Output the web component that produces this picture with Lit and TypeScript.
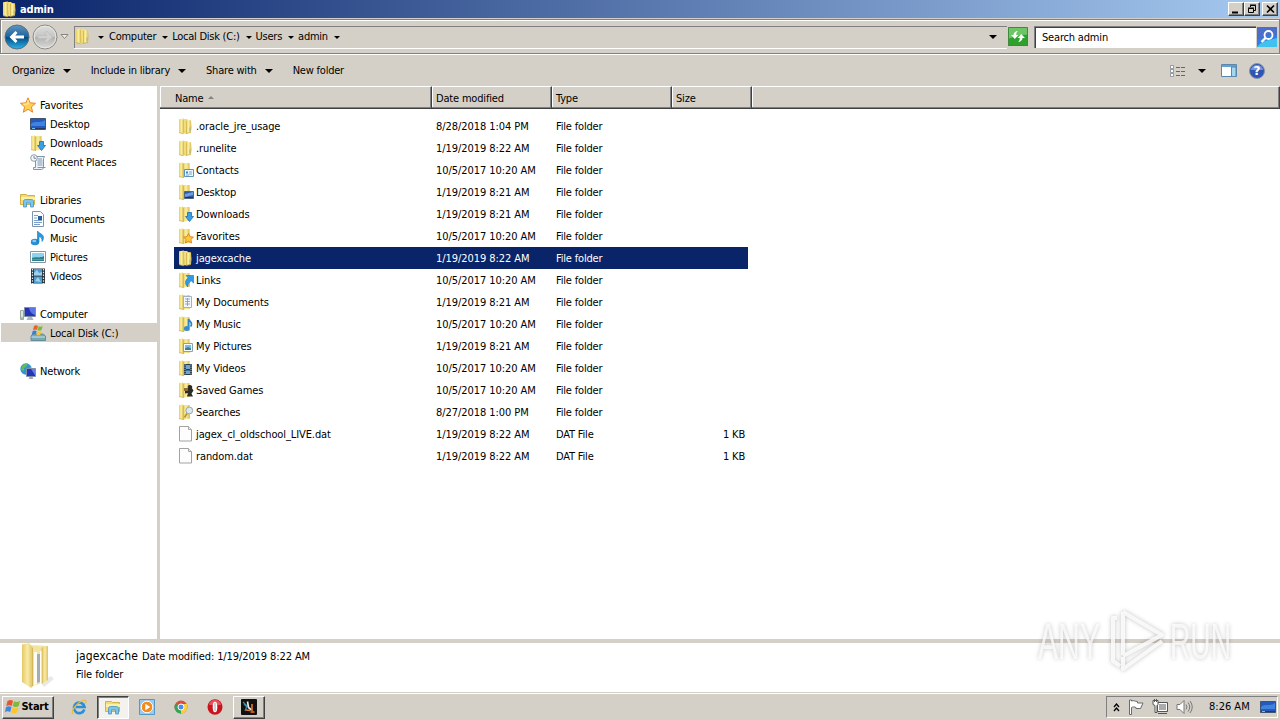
import { css, html, LitElement, svg } from 'lit';
import type { SVGTemplateResult } from 'lit';
import { customElement, property } from 'lit/decorators.js';
import { classMap } from 'lit/directives/class-map.js';

const folderGradient = svg`
  <defs>
    <linearGradient id="gold">
      <stop stop-color="#e9ce62"/>
      <stop offset=".45" stop-color="#faefa2"/>
      <stop offset="1" stop-color="#d9b849"/>
    </linearGradient>
  </defs>`;

const folder = svg`
  ${folderGradient}
  <path d="M1 1.300L6 .5l1 14.500-1.500.7L1 14.500z" fill="url(#gold)"/>
  <path d="M5.500 1h4l.5 13.500-3.500.8z" fill="#f2dd7c"/>
  <path d="M8 2l5 .3.500 7-.5 5L8 15.500z" fill="url(#gold)"/>
  <path d="M5.300 2v12.500M8.500 3v12" stroke="#cfb04a" stroke-width=".7"/>
  <path d="M1 14.600l4.500 1.200M7.500 15.500l5.500-1" stroke="#c4a43e" stroke-width=".7"/>
  <path d="M12 9.500v4" stroke="#8fae9a" stroke-width=".9"/>`;

const openFolder = svg`
  ${folderGradient}
  <path d="M1 1l4-.5 1 14.800L1 14.500z" fill="url(#gold)"/>
  <path d="M5 1h6.500l.5 13.500-5.500 1L5 15z" fill="url(#gold)"/>
  <path d="M5.300 2v13" stroke="#c8a840" stroke-width=".7"/>
  <path d="M1 14.600l5 1" stroke="#c4a43e" stroke-width=".7"/>`;

const icons: Record<string, SVGTemplateResult> = {
  folder,
  contacts: svg`${openFolder}<path d="M6.500 7.500h9v7h-9z" fill="#eaf5fd" stroke="#5b93bd"/><path d="M8 9.500h2v2h-2z" fill="#3c86c4"/><path d="M11 10h3M11 12h3M8 13h3" stroke="#77a9cd"/>`,
  desktopFolder: svg`${openFolder}<path d="M6.500 7.500h9v7h-9z" fill="#2d5cb0" stroke="#54657f"/><path d="M7 10l8-2v3l-8 2z" fill="#6fa0dc"/><path d="M7 13.500h8" stroke="#24344f"/>`,
  downloads: svg`${openFolder}<path d="M9.500 6.500h4v4h2l-4 5-4-5h2z" fill="#39a0e2" stroke="#1c6cb4" stroke-width=".8"/>`,
  favoritesFolder: svg`${openFolder}<path d="M10.500 5.500l1.500 3.200 3.500.4-2.600 2.300.7 3.600-3.100-1.800-3.100 1.800.7-3.600L5.500 9.100l3.500-.4z" fill="#ffc83c" stroke="#d9821a" stroke-width=".9"/>`,
  links: svg`${openFolder}<path d="M8 3.500h7.500V11l-2.300-2.200C10.500 10.500 9.500 12.500 9.800 15 6.500 12 7 8.500 10.200 5.800z" fill="#2f9be6" stroke="#176cb3" stroke-width=".6"/>`,
  documentsFolder: svg`${openFolder}<path d="M5.500 2.500h8v11h-8z" fill="#f4f8fc" stroke="#9db2c4"/><path d="M7 5h5M7 7.500h5M7 10h5M9.500 4v8" stroke="#7ea2c6" stroke-width=".9"/>`,
  musicFolder: svg`${openFolder}<path d="M10.500 12V3c.5 2 3 2.600 3 5 0 1-.5 2-1 2.500" fill="none" stroke="#2b82c4" stroke-width="1.700"/><ellipse cx="8.700" cy="12.500" rx="2.800" ry="2.500" fill="#338fd0"/>`,
  picturesFolder: svg`${openFolder}<path d="M5.500 5.500h9v8h-9z" fill="#f6fafc" stroke="#8da0ad"/><path d="M7 7h6v5H7z" fill="#79bce3"/><path d="M7 10.500l3-1.500 3 1.500V12H7z" fill="#37828b"/>`,
  videosFolder: svg`${openFolder}<path d="M6 4h8v11H6z" fill="#2f3d49"/><path d="M8 5h4v4H8zM8 10.500h4V14H8z" fill="#65a8d8"/><path d="M7 4.500v10M13 4.500v10" stroke="#cfdde8" stroke-dasharray="1 1.200"/>`,
  savedGames: svg`${openFolder}<path d="M11.500 3c2 0 3.500 1.500 2.500 3.200l1.500 2.300-2 3 1.500 3H9l1-3.500-3 .5V7l3-1c-.8-1.500 0-3 1.500-3z" fill="#2f2b26"/><path d="M6 6h4v3H6z" fill="#8a6f30"/>`,
  searches: svg`${openFolder}<circle cx="11.300" cy="6.500" r="3.400" fill="#d8e9ef" stroke="#98a9ad"/><path d="M9 9.500l-2.500 4" stroke="#b8923c" stroke-width="1.800"/>`,
  file: svg`<path d="M1.500.5h9l3 3v11.500h-12z" fill="#fdfdfd" stroke="#a2a2a2"/><path d="M10.500.5v3h3" fill="#ececec" stroke="#a6a6a6"/>`,
  star: svg`<path d="M8 .8l2.100 5 5.400.5-4.100 3.600 1.300 5.300L8 12.300l-4.700 2.900 1.300-5.300L.5 6.300l5.400-.5z" fill="#ffd155" stroke="#e8872b"/><path d="M8 3v4L3 7.200" fill="none" stroke="#fff0b5"/>`,
  desktop: svg`<path d="M.5 2.500h15v11H.5z" fill="#245ac0" stroke="#42536e"/><path d="M1 8C5 4 10 8 15 4v6H1z" fill="#3e83dd"/><path d="M1 12.500h14" stroke="#263b58"/><path d="M2 12.500h3" stroke="#78b9ec"/>`,
  recent: svg`<path d="M5.500 2.500h9l-1 2v9c0 1-1 2-2 2h-8v-2h2z" fill="#edf4f9" stroke="#7e96a6"/><path d="M8 5h4M7.500 7h5M7.500 9h5M7.500 11h5M7.500 13.500h8" stroke="#7897b0"/><circle cx="4" cy="4" r="3.300" fill="#f4f7f9" stroke="#8ba0ac"/><path d="M4 2v2.300h2" fill="none" stroke="#597386" stroke-width=".8"/>`,
  libraries: svg`<path d="M.5 2.500h6l1 1h7v9H.5z" fill="#f1db72" stroke="#cfb24a"/><path d="M1 5h14v3H1z" fill="#fbf0a8"/><path d="M3.500 15V9.500c0-1 .5-2 2-2h6c1.500 0 2 1 2 2V15h-3v-4h-4v4z" fill="#7dc4ec" stroke="#4795c4" stroke-width=".8"/>`,
  document: svg`<path d="M2.500.5h8l3 3v12h-11z" fill="#fafcff" stroke="#7c94ad"/><path d="M4 4.500h4M4 7h3M4 9.500h8M4 11.500h8M4 13.500h6" stroke="#6c94c2" stroke-width=".9"/><path d="M8 5h4v4H8z" fill="#265d9f"/>`,
  music: svg`<ellipse cx="5" cy="12" rx="4.200" ry="3.300" fill="#288fd2"/><path d="M7.500 12V1C9 3.500 13.500 4 13.500 7.500c0 1.500-.6 3-1.500 4 .3-3-1-4.500-3-5V12z" fill="#2e9ade" stroke="#1875b8" stroke-width=".6"/><ellipse cx="4.300" cy="11" rx="2" ry="1.200" fill="#8ccbf0"/>`,
  pictures: svg`<path d="M.5 2.500h15v11H.5z" fill="#fff" stroke="#8197a5"/><path d="M2 4h12v8H2z" fill="#8bd2ef"/><path d="M2 9c4-2 7 1 12-2v5H2z" fill="#2d7d87"/><path d="M2 10.500h12" stroke="#4aa5a7"/>`,
  videos: svg`<path d="M1 .5h14v15H1z" fill="#2b333b"/><path d="M4 1h8v6.500H4zM4 8.500h8V15H4z" fill="#4d9bd1"/><path d="M4 5l3-3 2 3 3-1v3.500H4zM5 13l3-4 3 5z" fill="#9fd1ec"/><path d="M2.500 1v15M13.500 1v15" stroke="#dfe9ef" stroke-width="1.200" stroke-dasharray="1.500 1.300"/>`,
  computer: svg`<path d="M.5 4.500h3v9h-3z" fill="#dce5df" stroke="#9aa79f"/><path d="M1 12h2" stroke="#46b64a"/><path d="M4.500 1.500h11v9h-11z" fill="#2434b4" stroke="#7c8fa6"/><path d="M9 2h6v7c-3-1-5-3-6-7z" fill="#5d77e2"/><path d="M8 11h4l1.500 3h-7z" fill="#a9b7c3"/>`,
  disk: svg`<path d="M1 11l2-2h10l2.500 2v4.500H1z" fill="#7ba6b8" stroke="#567f92" stroke-width=".8"/><path d="M1.500 12h13.500" stroke="#cae4ec"/><path d="M11.500 14h2.500" stroke="#4be04b"/><path d="M4 1c1.500-1 3-.7 4 0L7 5c-1.300-.8-2.500-.7-4 0z" fill="#e8622a"/><path d="M8.700 1.300c1.500.7 2.700.5 4-.3l-1.200 4c-1.300.8-2.500.7-4 .2z" fill="#7cb83a"/><path d="M2.700 6c1.500-.8 2.800-.7 4 0l-1 3.500c-1.300-.6-2.500-.6-4 .2z" fill="#3d7dd8"/><path d="M7.400 6.300c1.300.6 2.500.6 4-.2l-1.100 3.700c-1.300.7-2.500.7-3.900.1z" fill="#f8c530"/>`,
  network: svg`<circle cx="6" cy="6" r="5.700" fill="#2e95d0"/><path d="M2 3c2-2 4-2.500 6-2.200L6 4 4 5v3L1 7zM8 5l3-1v4H8z" fill="#64bd5a"/><path d="M6.500 5.500h9v8h-9z" fill="#2335b8" stroke="#8290a8"/><path d="M11 6h4v6z" fill="#6a80e6"/><path d="M9.500 14h3l1 2h-5z" fill="#9fadb9"/>`,
  refresh: svg`<rect width="20" height="19" fill="#2ea02c"/><path d="M0 0h20v8C13 7 7 9 0 12z" fill="#6cc665"/><path d="M.5.5h19v18H.5z" fill="none" stroke="#3f8a3f"/><path d="M3 8h2.500c0-2 2-4 4.500-4-1.500 1-1.800 2.500-1.800 4h2.300L6.800 12zM17 11h-2.500c0 2-2 4-4.500 4 1.500-1 1.800-2.500 1.800-4H9.500L13.200 7z" fill="#fff"/>`,
  search: svg`<rect width="20" height="20" fill="#2f80e4"/><path d="M0 0h20v9C13 8 7 10 0 13z" fill="#4a6fcb"/><path d="M0 20c5-7 14-7 20-9v9z" fill="#40c2f0"/><circle cx="11.500" cy="8" r="4" fill="none" stroke="#fff" stroke-width="1.800"/><path d="M8.500 11L4.500 15" stroke="#fff" stroke-width="2.400"/>`,
  views: svg`<path d="M.5.500h3v3h-3zM.5 4.500h3v3h-3zM.5 8.500h3v3h-3z" fill="#fff" stroke="#7d8793" stroke-width=".8"/><path d="M6 2.500h4M11 2.500h4M6 6.500h4M11 6.500h4M6 10.500h4M11 10.500h4" stroke="#5f6771"/>`,
  preview: svg`<path d="M.5.500h15v12H.5z" fill="#fff" stroke="#5886ad"/><path d="M1 2h14" stroke="#6c9fc9" stroke-width="2"/><path d="M10.500 3h4.500v9.500h-4.500z" fill="#a4d8f0" stroke="#5886ad"/>`,
  help: svg`<circle cx="8" cy="8" r="7.500" fill="#2f55b4" stroke="#8494ad"/><path d="M2 7a6 5 0 0 1 12 0z" fill="#7593d8"/><text class="bold" x="8" y="12.300" text-anchor="middle" fill="#fff">?</text>`,
  windows: svg`<path d="M2.500 2c2-1.300 4-1.200 5.500-.2L6.800 7C5 6 3.300 6 1.200 7.200z" fill="#e8572a"/><path d="M9 2.300c2 1 3.800.8 6-.4l-1.300 5.200c-2 1.200-4 1.200-6 .2z" fill="#7cba3c"/><path d="M1 8.300c2-1.200 3.800-1.200 5.500-.2l-1.300 5c-1.800-1-3.500-1-5.200.2z" fill="#3f86de"/><path d="M7.500 8.500c2 1 3.900.8 6-.3l-1.300 5.100c-2 1.200-4 1.100-6 .2z" fill="#fac52d"/>`,
  ie: svg`<path d="M13.300 10.500A5.300 5.300 0 1 1 13.500 8H5" fill="none" stroke="#2a8fd9" stroke-width="2.700"/><path d="M2 15C-1 12.500 6 3.500 12 1.500c3-1 3.500 1 2.500 3" fill="none" stroke="#efbd32" stroke-width="1.300"/>`,
  player: svg`<path d="M.5.500h15v15H.5z" fill="#9acbed" stroke="#5896c4"/><circle cx="8" cy="8" r="5.800" fill="#f58b1f" stroke="#fff"/><path d="M6.300 4.800v6.400L11.300 8z" fill="#fff"/>`,
  chrome: svg`<circle cx="8" cy="8" r="6.500" fill="#dd4b3e"/><path d="M8 8L2.400 4.700A6.500 6.500 0 0 0 8 14.500L10.800 9z" fill="#35a454"/><path d="M8 8h6.500A6.500 6.500 0 0 1 8 14.500z" fill="#fbcf3a"/><path d="M8 5h5.800a6.500 6.500 0 0 1 .7 3H9z" fill="#fbcf3a"/><circle cx="8" cy="8" r="3" fill="#4b8bf0" stroke="#fff"/>`,
  opera: svg`<ellipse cx="8" cy="8" rx="7.500" ry="7.800" fill="#c9151e"/><path d="M2 6a6 5 0 0 1 12 0z" fill="#e8525a"/><ellipse cx="8" cy="8" rx="2.300" ry="5.300" fill="#fff"/><path d="M8 4v8" stroke="#bfc2c6" stroke-width="1.500"/>`,
  runelite: svg`<rect width="16" height="16" rx="1" fill="#111"/><path d="M2 3l4 4-2 5M3 5l3 3" fill="none" stroke="#3590ac" stroke-width="1.200"/><path d="M6.500 2.500l1 6 3 2.500" fill="none" stroke="#f0e5d8" stroke-width="1.700"/><path d="M5 11l4 .5M11 5v7M9.500 13h4" fill="none" stroke="#e7782c" stroke-width="1.600"/>`,
  flag: svg`<path d="M1.500 1v14.500h2v-7C5 7.500 6.500 8 8 8.500v1h4.500l2.500-5.500H9.500V2.600C7 2.400 6 1 3.500 2V1z" fill="#fff" stroke="#6b6b6b"/>`,
  tray: svg`<path d="M5.500 3.500h10v9h-10z" fill="#aaa" stroke="#555"/><path d="M6.500 4.500h8v7h-8z" fill="none" stroke="#fff"/><path d="M6 14.500h9" stroke="#555"/><path d="M1 1.500h5v4l-1 1v7h-2v-7l-2-1z" fill="#fff" stroke="#555"/><path d="M2.500 0v3M4.500 0v3" stroke="#555"/>`,
  sound: svg`<path d="M1 5.500h3l4-4v13l-4-4H1z" fill="#fff" stroke="#777"/><path d="M10 5.500q2 2.500 0 5M12 3.500q3.500 4.500 0 9M14 2q4.500 6 0 12" fill="none" stroke="#777"/>`,
  back: svg`<defs><linearGradient id="blue" x1="0" y1="0" x2="0" y2="1"><stop stop-color="#6394bd"/><stop offset=".48" stop-color="#1b659f"/><stop offset=".52" stop-color="#064a86"/><stop offset="1" stop-color="#29b6ea"/></linearGradient></defs><circle cx="13" cy="13" r="12" fill="url(#blue)" stroke="#5b6f80"/><path d="M5.500 13L11.500 7l2 2-2.300 2.500H20v3h-8.800l2.300 2.500-2 2z" fill="#fff"/>`,
  forward: svg`<defs><linearGradient id="grey" x1="0" y1="0" x2="0" y2="1"><stop stop-color="#dededc"/><stop offset=".48" stop-color="#c6c6c4"/><stop offset=".52" stop-color="#b2b2b0"/><stop offset="1" stop-color="#dcdcda"/></linearGradient></defs><circle cx="13" cy="13" r="12" fill="url(#grey)" stroke="#8c8c8a"/><circle cx="13" cy="13" r="10.800" fill="none" stroke="#e6e6e4"/><path d="M20.500 13l-6-6-2 2 2.300 2.500H6v3h8.800L12.500 17l2 2z" fill="#d0d0ce" stroke="#bcbcba" stroke-width=".7"/>`,
};

@customElement('shell-icon')
export class ShellIcon extends LitElement {
  static styles = css`
    :host {
      display: block;
      flex: none;
    }

    svg {
      display: block;
      overflow: visible;
    }

    .bold {
      font: bold 12px 'DejaVu Sans', sans-serif;
    }
  `;

  @property()
  public name: string = '';

  @property({ type: Number })
  public width: number = 16;

  @property({ type: Number })
  public height: number = 16;

  protected render() {
    return html`<svg width=${this.width} height=${this.height}>${icons[this.name]}</svg>`;
  }
}

interface TreeItem {
  icon: string;
  label: string;
  root?: boolean;
  selected?: boolean;
}

const tree: TreeItem[][] = [
  [
    { icon: 'star', label: 'Favorites', root: true },
    { icon: 'desktop', label: 'Desktop' },
    { icon: 'downloads', label: 'Downloads' },
    { icon: 'recent', label: 'Recent Places' },
  ],
  [
    { icon: 'libraries', label: 'Libraries', root: true },
    { icon: 'document', label: 'Documents' },
    { icon: 'music', label: 'Music' },
    { icon: 'pictures', label: 'Pictures' },
    { icon: 'videos', label: 'Videos' },
  ],
  [
    { icon: 'computer', label: 'Computer', root: true },
    { icon: 'disk', label: 'Local Disk (C:)', selected: true },
  ],
  [{ icon: 'network', label: 'Network', root: true }],
];

const files: string[][] = [
  ['folder', '.oracle_jre_usage', '8/28/2018 1:04 PM', 'File folder', ''],
  ['folder', '.runelite', '1/19/2019 8:22 AM', 'File folder', ''],
  ['contacts', 'Contacts', '10/5/2017 10:20 AM', 'File folder', ''],
  ['desktopFolder', 'Desktop', '1/19/2019 8:21 AM', 'File folder', ''],
  ['downloads', 'Downloads', '1/19/2019 8:21 AM', 'File folder', ''],
  ['favoritesFolder', 'Favorites', '10/5/2017 10:20 AM', 'File folder', ''],
  ['folder', 'jagexcache', '1/19/2019 8:22 AM', 'File folder', ''],
  ['links', 'Links', '10/5/2017 10:20 AM', 'File folder', ''],
  ['documentsFolder', 'My Documents', '1/19/2019 8:21 AM', 'File folder', ''],
  ['musicFolder', 'My Music', '10/5/2017 10:20 AM', 'File folder', ''],
  ['picturesFolder', 'My Pictures', '1/19/2019 8:21 AM', 'File folder', ''],
  ['videosFolder', 'My Videos', '10/5/2017 10:20 AM', 'File folder', ''],
  ['savedGames', 'Saved Games', '10/5/2017 10:20 AM', 'File folder', ''],
  ['searches', 'Searches', '8/27/2018 1:00 PM', 'File folder', ''],
  ['file', 'jagex_cl_oldschool_LIVE.dat', '1/19/2019 8:22 AM', 'DAT File', '1 KB'],
  ['file', 'random.dat', '1/19/2019 8:22 AM', 'DAT File', '1 KB'],
];

@customElement('app-root')
export default class AppRoot extends LitElement {
  static styles = css`
    :host {
      display: flex;
      flex-direction: column;
      position: relative;
      width: 1280px;
      height: 720px;
      overflow: hidden;
      background: #d4d0c8;
      color: #000;
      font: 11px/14px 'DejaVu Sans Condensed', 'DejaVu Sans', sans-serif;
      font-stretch: condensed;
      letter-spacing: -0.18px;
      white-space: nowrap;
    }

    .title {
      display: flex;
      align-items: center;
      flex: none;
      box-sizing: border-box;
      height: 18px;
      padding: 0 2px;
      background: linear-gradient(90deg, #0a246a, #a6caf0);
      color: #fff;
      font-weight: bold;
    }

    .title__text {
      flex: 1;
      margin-left: 2px;
      padding-top: 2px;
    }

    .title__button {
      display: block;
      box-sizing: border-box;
      width: 16px;
      height: 14px;
      background: #d4d0c8;
      border: 1px solid;
      border-color: #fff #404040 #404040 #fff;
      box-shadow: inset -1px -1px #808080;
    }

    .title__button--close {
      margin-left: 2px;
    }

    .nav {
      display: flex;
      align-items: center;
      flex: none;
      box-sizing: border-box;
      height: 35px;
      margin-top: 1px;
      padding-left: 3px;
      border: 1px solid #808080;
      box-shadow: inset 1px 1px #fff, 0 1px #fff;
    }

    .nav__button {
      margin-top: 1px;
    }

    .nav__button--forward {
      margin-left: 2px;
    }

    .nav__history {
      margin: 1px 5px 0 2px;
    }

    .address {
      display: flex;
      align-items: center;
      box-sizing: border-box;
      width: 933px;
      height: 22px;
      border: solid #808080;
      border-width: 1px 0 0 1px;
      box-shadow: 0 1px #fff;
    }

    .address__icon {
      margin: 0 7px 2px 0;
    }

    .crumb {
      display: flex;
      align-items: center;
      gap: 6px;
      margin-right: 5px;
      letter-spacing: -0.25px;
    }

    .crumb + .crumb {
      margin-right: 4px;
    }

    .arrow {
      flex: none;
      width: 0;
      height: 0;
      border: solid transparent;
      border-width: 3px 3px 0;
      border-top-color: #000;
    }

    .arrow--large {
      border-width: 4px 4px 0;
    }

    .address__drop {
      margin-left: auto;
      margin-right: 10px;
    }

    .nav__refresh {
      margin-left: 1px;
    }

    .search {
      display: flex;
      align-items: center;
      box-sizing: border-box;
      width: 222px;
      height: 22px;
      margin: 0 1px 0 6px;
      padding: 1px 0 0 7px;
      background: #fff;
      border: solid #808080;
      border-width: 1px 0 0 1px;
      box-shadow: inset 1px 1px #404040;
    }

    .toolbar {
      display: flex;
      align-items: center;
      flex: none;
      height: 31px;
      margin-top: 1px;
      padding-left: 12px;
    }

    .toolbar__item {
      display: flex;
      align-items: center;
      gap: 8px;
      margin-right: 20px;
      letter-spacing: -0.21px;
    }

    .toolbar__tools {
      display: flex;
      align-items: center;
      margin-left: auto;
      padding-right: 15px;
    }

    .toolbar__views {
      margin-right: 12px;
    }

    .toolbar__preview {
      margin: 0 12px 0 15px;
    }

    .body {
      display: flex;
      flex: none;
      height: 553px;
    }

    .tree {
      box-sizing: border-box;
      width: 160px;
      padding-top: 9px;
      background: #fff;
      border-right: 3px solid #d4d0c8;
    }

    .tree__group {
      margin-bottom: 19px;
    }

    .tree__item {
      display: flex;
      align-items: center;
      gap: 4px;
      height: 19px;
      margin-left: 1px;
      padding-left: 29px;
    }

    .tree__item--root {
      padding-left: 19px;
    }

    .tree__item--selected {
      background: #d4d0c8;
      margin-right: -2px;
    }

    .tree__label {
      padding-top: 2px;
    }

    .list {
      flex: 1;
      background: #fff;
    }

    .list__head {
      display: grid;
      grid-template-columns: 272px 120px 120px 80px 1fr;
      height: 23px;
      margin-bottom: 6px;
    }

    .list__column {
      display: flex;
      align-items: center;
      gap: 5px;
      padding: 2px 0 0 4px;
      background: #d4d0c8;
      border: 1px solid;
      border-color: #fff #404040 #404040 #fff;
      border-left-width: 0;
      box-shadow: inset -1px -1px #808080, inset 1px 0 #fff;
    }

    .list__column--name {
      padding-left: 15px;
    }

    .sort {
      border: solid transparent;
      border-width: 0 3px 3px;
      border-bottom-color: #86837e;
      margin-bottom: 3px;
    }

    .file {
      display: grid;
      grid-template-columns: 258px 120px 120px 72px;
      align-items: center;
      width: 570px;
      height: 22px;
      margin-left: 14px;
      padding-left: 4px;
    }

    .file--selected {
      background: #0a246a;
      color: #fff;
    }

    .file__name {
      display: flex;
      align-items: center;
      gap: 2px;
      letter-spacing: -0.1px;
    }

    .file__icon {
      margin-bottom: 1px;
    }

    .file__text {
      padding-top: 2px;
    }

    .file__text--date {
      letter-spacing: -0.06px;
    }

    .file__text--size {
      margin-right: 3px;
      text-align: right;
    }

    .details {
      display: flex;
      flex: none;
      box-sizing: border-box;
      height: 53px;
      padding-left: 20px;
      background: #fff;
      border-top: 4px solid #d4d0c8;
    }

    .details__text {
      margin: 4px 0 0 16px;
      line-height: 18px;
      letter-spacing: -0.1px;
    }

    .details__name {
      margin-right: 4px;
      font-size: 12px;
      letter-spacing: 0.1px;
    }

    .taskbar {
      display: flex;
      align-items: center;
      flex: 1;
      gap: 2px;
      box-sizing: border-box;
      margin-top: 1px;
      padding: 0 2px;
      border-top: 1px solid #fff;
    }

    .task {
      display: flex;
      align-items: center;
      justify-content: center;
      box-sizing: border-box;
      width: 32px;
      height: 23px;
      border: 1px solid transparent;
    }

    .task--raised {
      background: #d4d0c8;
      border-color: #fff #404040 #404040 #fff;
      box-shadow: inset -1px -1px #808080;
    }

    .task--pressed {
      background: #f4f2ee;
      border-color: #404040 #fff #fff #404040;
      box-shadow: inset 1px 1px #808080;
    }

    .task--start {
      width: 52px;
      margin-right: 7px;
      padding-right: 2px;
      font-weight: bold;
      letter-spacing: -0.2px;
    }

    .clock {
      display: flex;
      align-items: center;
      box-sizing: border-box;
      width: 172px;
      height: 22px;
      margin-left: auto;
      padding-left: 6px;
      border: 1px solid;
      border-color: #808080 #fff #fff #808080;
    }

    .clock__time {
      margin: 0 10px 0 17px;
      letter-spacing: 0;
    }

    .clock__icon {
      margin-left: 8px;
    }

    .watermark {
      position: absolute;
      left: 1030px;
      top: 600px;
      filter: drop-shadow(0 0 2px rgba(0, 0, 0, 0.3));
    }

    .watermark__text {
      font: 50px 'Liberation Sans Narrow', 'Liberation Sans', sans-serif;
      letter-spacing: 0;
    }
  `;

  private renderTreeItem(item: TreeItem) {
    const classes = {
      'tree__item': true,
      'tree__item--root': !!item.root,
      'tree__item--selected': !!item.selected,
    };
    return html`
      <div class=${classMap(classes)}>
        <shell-icon name=${item.icon}></shell-icon>
        <span class="tree__label">${item.label}</span>
      </div>
    `;
  }

  private renderFile([icon, name, date, type, size]: string[]) {
    return html`
      <div class=${classMap({ 'file': true, 'file--selected': name === 'jagexcache' })}>
        <div class="file__name">
          <shell-icon class="file__icon" name=${icon}></shell-icon>
          <span class="file__text">${name}</span>
        </div>
        <div class="file__text file__text--date">${date}</div>
        <div class="file__text">${type}</div>
        <div class="file__text file__text--size">${size}</div>
      </div>
    `;
  }

  protected render() {
    return html`
      <div class="title">
        <shell-icon name="folder"></shell-icon>
        <span class="title__text">admin</span>
        <svg class="title__button"><path d="M3 9.500h6" stroke="#000" stroke-width="2"/></svg>
        <svg class="title__button"><path d="M5.500 4V2.500h5v5H9M5 2h6M3.500 5.500h5v4h-5zM3 5h6" fill="none" stroke="#000"/></svg>
        <svg class="title__button title__button--close"><path d="M4 2.500l7 7M11 2.500l-7 7" stroke="#000" stroke-width="1.600"/></svg>
      </div>

      <div class="nav">
        <shell-icon class="nav__button" name="back" width="26" height="26"></shell-icon>
        <shell-icon class="nav__button nav__button--forward" name="forward" width="26" height="26"></shell-icon>
        <svg class="nav__history" width="9" height="6"><path d="M1 .5h7L4.500 4.500z" fill="#eee" stroke="#88857f"/></svg>
        <div class="address">
          <shell-icon class="address__icon" name="folder"></shell-icon>
          <div class="crumb"><i class="arrow"></i></div>
          ${['Computer', 'Local Disk (C:)', 'Users', 'admin'].map(
            (crumb) => html`<div class="crumb">${crumb}<i class="arrow"></i></div>`
          )}
          <i class="arrow arrow--large address__drop"></i>
        </div>
        <shell-icon class="nav__refresh" name="refresh" width="20" height="19"></shell-icon>
        <div class="search">Search admin</div>
        <shell-icon name="search" width="20" height="20"></shell-icon>
      </div>

      <div class="toolbar">
        ${['Organize', 'Include in library', 'Share with'].map(
          (label) => html`<div class="toolbar__item">${label}<i class="arrow arrow--large"></i></div>`
        )}
        <div class="toolbar__item">New folder</div>
        <div class="toolbar__tools">
          <shell-icon class="toolbar__views" name="views" height="12"></shell-icon>
          <i class="arrow arrow--large"></i>
          <shell-icon class="toolbar__preview" name="preview" height="13"></shell-icon>
          <shell-icon name="help"></shell-icon>
        </div>
      </div>

      <div class="body">
        <div class="tree">
          ${tree.map((group) => html`<div class="tree__group">${group.map((item) => this.renderTreeItem(item))}</div>`)}
        </div>
        <div class="list">
          <div class="list__head">
            <div class="list__column list__column--name">Name<i class="sort"></i></div>
            <div class="list__column">Date modified</div>
            <div class="list__column">Type</div>
            <div class="list__column">Size</div>
            <div class="list__column"></div>
          </div>
          ${files.map((file) => this.renderFile(file))}
        </div>
      </div>

      <div class="details">
        <svg width="40" height="48">
          <defs>
            <linearGradient id="panel">
              <stop stop-color="#e6c968"/>
              <stop offset=".5" stop-color="#f8eaa6"/>
              <stop offset="1" stop-color="#dfc05e"/>
            </linearGradient>
          </defs>
          <path d="M20 39l11-6 3 3-10 8z" fill="#e9e9e7"/>
          <path d="M9 2l19 1v33l-6 4-12 4z" fill="#f3e3a0"/>
          <path d="M14 9h3v32l-3 1z" fill="#fffdf2"/>
          <path d="M17 11h3v28l-3 1z" fill="#a3adb8"/>
          <path d="M20 8h2v32l-2 1z" fill="#fffdf2"/>
          <path d="M22 4l6-1v34l-6 4z" fill="url(#panel)"/>
          <path d="M2 1.500L9 0l4 5v38l-2 2-9-6z" fill="url(#panel)"/>
          <path d="M12.500 5v38M22 5v35" stroke="#cfb25a" stroke-width=".7"/>
        </svg>
        <div class="details__text">
          <div><span class="details__name">jagexcache</span>Date modified: 1/19/2019 8:22 AM</div>
          <div>File folder</div>
        </div>
      </div>

      <div class="taskbar">
        <div class="task task--raised task--start"><shell-icon name="windows"></shell-icon>Start</div>
        <div class="task"><shell-icon name="ie"></shell-icon></div>
        <div class="task task--pressed"><shell-icon name="libraries"></shell-icon></div>
        <div class="task"><shell-icon name="player"></shell-icon></div>
        <div class="task"><shell-icon name="chrome"></shell-icon></div>
        <div class="task"><shell-icon name="opera"></shell-icon></div>
        <div class="task task--raised"><shell-icon name="runelite"></shell-icon></div>
        <div class="clock">
          <svg width="7" height="9"><path d="M1 4l2.500-3L6 4M1 8l2.500-3L6 8" fill="none" stroke="#000" stroke-width="1.300"/></svg>
          <shell-icon class="clock__icon" name="flag"></shell-icon>
          <shell-icon class="clock__icon" name="tray"></shell-icon>
          <shell-icon class="clock__icon" name="sound"></shell-icon>
          <span class="clock__time">8:26 AM</span>
          <shell-icon name="desktop"></shell-icon>
        </div>
      </div>

      <svg class="watermark" width="230" height="90">
        <g fill="#fff" fill-opacity=".75">
          <text class="watermark__text" x="8" y="59" textLength="62" lengthAdjust="spacingAndGlyphs">ANY</text>
          <text class="watermark__text" x="140" y="59" textLength="61" lengthAdjust="spacingAndGlyphs">RUN</text>
        </g>
        <path d="M87 18h-4v43l7 5M93 12v43M93 12l39 23-39 21M93 57v12l39-28" fill="none" stroke="#fff" stroke-opacity=".8" stroke-width="4" stroke-linejoin="round"/>
      </svg>
    `;
  }
}
